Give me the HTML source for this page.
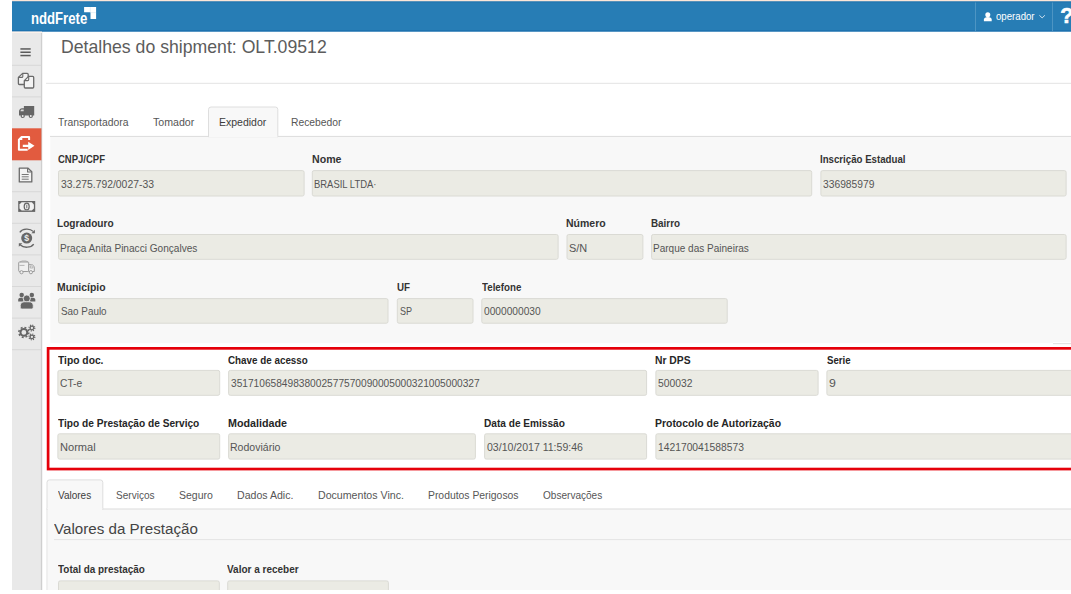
<!DOCTYPE html>
<html lang="pt-BR">
<head>
<meta charset="utf-8">
<title>nddFrete - Detalhes do shipment</title>
<style>
html,body{margin:0;padding:0;}
body{width:1071px;height:594px;overflow:hidden;background:#fff;position:relative;font-family:"Liberation Sans",sans-serif;}
#app{position:absolute;left:0;top:0;width:1071px;height:594px;overflow:hidden;}
.abs{position:absolute;}
.t{position:absolute;white-space:nowrap;line-height:20px;transform-origin:0 0;}
</style>
</head>
<body>
<div id="app">
<svg class="abs" style="left:0;top:0" width="1071" height="594" viewBox="0 0 1071 594">
  <!-- sidebar -->
  <rect x="12" y="31" width="29.300" height="559" fill="#e9e9e9"/>
  <rect x="40.900" y="31" width="1.100" height="559" fill="#cfcfcf"/>
  <rect x="42" y="31" width="1" height="559" fill="#f4f4f4"/>
  <rect x="12" y="128.300" width="29.400" height="32" fill="#e25b3f"/>
  <!-- header -->
  <rect x="12" y="0" width="1059" height="2" fill="#fbe6d8"/>
  <rect x="12" y="1.500" width="1059" height="30" fill="#277db5"/>
  <rect x="12" y="1.500" width="1059" height="1" fill="#2074ae"/>
  <rect x="12" y="30.200" width="1059" height="1.300" fill="#1c70ad"/>
  <rect x="12" y="31.500" width="30" height="1.500" fill="#fdf2eb"/>
  <rect x="975" y="2.500" width="1" height="28.500" fill="#4d95c3"/>
  <rect x="1052" y="2.500" width="1" height="28.500" fill="#4d95c3"/>
  <!-- logo squares -->
  <path d="M84.100 7.100H96.100V19H90.500V12.300H84.100Z" fill="#fff"/>
  <path d="M90.300 7.100V12.300M90.500 12.600H96.100" stroke="#cfe2ef" stroke-width="0.500" fill="none"/>
  <!-- user icon -->
  <circle cx="987.800" cy="14.800" r="2.500" fill="#fff"/>
  <path d="M983.900 21.300v-1.800c0-1.600 1.600-2.600 3.900-2.600s3.900 1 3.900 2.600v1.800z" fill="#fff"/>
  <path d="M1039.400 15.300l2.750 2.600 2.750-2.600" stroke="#cfe2ef" stroke-width="1" fill="none"/>
  <!-- title hr -->
  <rect x="46" y="82.800" width="1025" height="1" fill="#e3e3e3"/>
  <!-- top tab pane -->
  <rect x="50.300" y="136.400" width="1021" height="206.800" fill="#f8f8f8"/>
  <rect x="50" y="135.900" width="1021" height="1" fill="#dcdcdc"/>
  <path d="M208.500 136.900V109.500a2.500 2.500 0 0 1 2.500-2.500H275.300a2.500 2.500 0 0 1 2.500 2.500V136.900Z" fill="#f8f8f8" stroke="#dedede" stroke-width="1"/>
  <rect x="209" y="135.500" width="68.300" height="2" fill="#f8f8f8"/>
  <rect x="1053" y="341.900" width="18" height="1.100" fill="#fff"/>
  <rect x="1053" y="343" width="18" height="1.200" fill="#e4e4e4"/>
  <!-- red highlight box -->
  <rect x="48.100" y="348.350" width="1040" height="120.700" fill="none" stroke="#e5000a" stroke-width="2.700"/>
  <!-- bottom tab pane -->
  <rect x="46.500" y="509" width="1024.500" height="81" fill="#f8f8f8"/>
  <rect x="46.500" y="508.500" width="1024.500" height="1" fill="#dcdcdc"/>
  <path d="M47 509.500V482.400a2.500 2.500 0 0 1 2.500-2.500H100.300a2.500 2.500 0 0 1 2.500 2.500V509.500Z" fill="#f8f8f8" stroke="#dedede" stroke-width="1"/>
  <rect x="47.500" y="508" width="54.800" height="2.500" fill="#f8f8f8"/>
  <rect x="46.500" y="509" width="1" height="81" fill="#e6e6e6"/>
  <rect x="54" y="539.100" width="1017" height="1" fill="#e4e4e4"/>
</svg>
<svg class="abs" style="left:0;top:31px" width="60" height="559" viewBox="0 31 60 559">
  <!-- separators -->
  <g fill="#d8d8d8">
    <rect x="12" y="64.8" width="29.3" height="1"/><rect x="12" y="96.4" width="29.3" height="1"/>
    <rect x="12" y="191.2" width="29.3" height="1"/><rect x="12" y="222.8" width="29.3" height="1"/>
    <rect x="12" y="254.4" width="29.3" height="1"/><rect x="12" y="286" width="29.3" height="1"/>
    <rect x="12" y="317.6" width="29.3" height="1"/><rect x="12" y="349.2" width="29.3" height="1"/>
  </g>
  <!-- 1 bars -->
  <g fill="#5a5a5a"><rect x="20.4" y="48.2" width="10.3" height="1.5"/><rect x="20.4" y="51.5" width="10.3" height="1.5"/><rect x="20.4" y="54.8" width="10.3" height="1.5"/></g>
  <!-- 2 files -->
  <g fill="#f3f3f3" stroke="#6a6a6a" stroke-width="1.3" stroke-linejoin="round">
    <path d="M19.4 84.500a1 1 0 0 1-1-1V77.400L22.600 73.400H27.200a1 1 0 0 1 1 1V84.500Z"/>
    <path d="M22.800 73.600V76.400a1 1 0 0 1-1 1H18.600" fill="none" stroke-width="1.1"/>
    <path d="M28.600 76.400H32.700a1 1 0 0 1 1 1V87a1 1 0 0 1-1 1H25.300a1 1 0 0 1-1-1V80.600Z"/>
    <path d="M28.700 76.600V79.600a1 1 0 0 1-1 1H24.500" fill="none" stroke-width="1.1"/>
  </g>
  <!-- 3 truck (flipped) -->
  <g fill="#666">
    <path d="M23.900 106.100H34.200V115.500H19V111.600C19 109.700 20.300 108.300 22.100 108.300H23.900Z"/>
    <circle cx="22.700" cy="115.900" r="2.150"/><circle cx="30.800" cy="115.900" r="2.150"/>
  </g>
  <path d="M21.300 109.500H23.700V111.200H20.500C20.500 110.400 20.800 109.800 21.300 109.500Z" fill="#dcdcdc"/>
  <circle cx="22.700" cy="116" r="0.950" fill="#f0f0f0"/><circle cx="30.800" cy="116" r="0.950" fill="#f0f0f0"/>
  <!-- 4 active: file + arrow -->
  <path d="M29.100 139.900V137.100H21.400L18.900 139.600V149.800H27.700" fill="none" stroke="#fff" stroke-width="2" stroke-linejoin="round"/>
  <path d="M19 139.900L22.300 136.700V139.900Z" fill="#fff"/>
  <path d="M22.800 144.800H28.200V141.700L34.500 145.850L28.200 150V146.900H22.800Z" fill="#fff"/>
  <!-- 5 file-text -->
  <g fill="#f3f3f3" stroke="#6a6a6a" stroke-width="1.3" stroke-linejoin="round">
    <path d="M19.300 168.100H27.800L31.800 171.800V181.900H19.300Z"/>
    <path d="M27.600 168.300V172H31.600" fill="none" stroke-width="1.1"/>
  </g>
  <g fill="#777"><rect x="21.700" y="174" width="7" height="1"/><rect x="21.700" y="176.300" width="7" height="1"/><rect x="21.700" y="178.700" width="7" height="1"/></g>
  <!-- 6 money -->
  <rect x="18.200" y="201" width="17" height="10.900" fill="#666"/>
  <path d="M21.600 202.300H31.800L33.900 204.400V208.500L31.800 210.600H21.600L19.500 208.500V204.400Z" fill="#f1f1f1"/>
  <ellipse cx="26.700" cy="206.450" rx="2.500" ry="3.300" fill="#f1f1f1" stroke="#666" stroke-width="1.200"/>
  <rect x="26.350" y="204.700" width="0.900" height="3.600" fill="#666"/>
  <!-- 7 dollar cycle -->
  <circle cx="26.700" cy="238.100" r="5.500" fill="#666"/>
  <text x="26.700" y="241.200" text-anchor="middle" font-family="Liberation Sans, sans-serif" font-weight="700" font-size="8.600" fill="#ececec">$</text>
  <g fill="none" stroke="#666" stroke-width="1.300">
    <path d="M19.800 232.300C22.400 228.300 30 228.100 33.200 231.400"/>
    <path d="M33.700 244.100C31 248 23.600 248.200 20.400 245"/>
  </g>
  <path d="M34.900 229.700V233.200H31.400Z" fill="#666"/>
  <path d="M18.800 246.700V243.200H22.300Z" fill="#666"/>
  <!-- 8 truck outline -->
  <g fill="#f0f0f0" stroke="#9c9c9c" stroke-width="1">
    <rect x="18.700" y="262" width="10" height="9.500" rx="0.800"/>
    <path d="M28.700 264.700H31.600C33.300 264.700 34.300 266.400 34.300 268V271.500H28.700Z"/>
    <path d="M30.200 266H31.500C32.400 266 32.900 267 32.900 268H30.200Z" stroke-width="0.700"/>
    <path d="M19.500 265.400H24.500M20 262L22 261H26L28 262" stroke-width="0.700" fill="none"/>
    <circle cx="21.500" cy="272.200" r="1.600"/><circle cx="30.900" cy="272.200" r="1.600"/>
  </g>
  <!-- 9 users -->
  <g fill="#666">
    <circle cx="21.700" cy="295" r="2.250"/><circle cx="31.800" cy="295" r="2.250"/>
    <path d="M18.200 301.500V299.800C18.200 298.400 19.200 297.700 20.400 297.700H22.800L23.600 301.500Z"/>
    <path d="M35.300 301.500V299.800C35.300 298.400 34.300 297.700 33.100 297.700H30.700L29.900 301.500Z"/>
    <circle cx="26.750" cy="298.500" r="3.500" stroke="#e9e9e9" stroke-width="0.800"/>
    <path d="M20.300 307.200V305.400C20.300 303.100 22.200 301.800 24.600 301.800H28.900C31.300 301.800 33.200 303.100 33.200 305.400V307.200C33.200 308.300 32.400 309 31.300 309H22.200C21.100 309 20.300 308.300 20.300 307.200Z" stroke="#e9e9e9" stroke-width="0.800"/>
  </g>
  <!-- 10 gears -->
  <g fill="none" stroke="#666">
    <circle cx="23.850" cy="332.400" r="3.400" stroke-width="2"/>
    <circle cx="23.850" cy="332.400" r="5" stroke-width="1.500" stroke-dasharray="1.963 1.964"/>
    <circle cx="31.900" cy="328" r="1.800" stroke-width="1.300"/>
    <circle cx="31.900" cy="328" r="2.900" stroke-width="1.200" stroke-dasharray="1.139 1.139"/>
    <circle cx="31.900" cy="336.900" r="1.800" stroke-width="1.300"/>
    <circle cx="31.900" cy="336.900" r="2.900" stroke-width="1.200" stroke-dasharray="1.139 1.139"/>
  </g>
</svg>

<svg class="abs" style="left:0;top:0" width="1071" height="594" viewBox="0 0 1071 594"><g fill="#ebebe4" stroke="#dadad4" stroke-width="1">
<rect x="58.50" y="170.60" width="245.60" height="25.40" rx="1.700"/>
<rect x="312.30" y="170.60" width="499.40" height="25.40" rx="1.700"/>
<rect x="820.90" y="170.60" width="245.20" height="25.40" rx="1.700"/>
<rect x="58.50" y="234.50" width="499.60" height="24.80" rx="1.700"/>
<rect x="567.00" y="234.50" width="75.90" height="24.80" rx="1.700"/>
<rect x="651.60" y="234.50" width="414.50" height="24.80" rx="1.700"/>
<rect x="58.50" y="298.60" width="329.50" height="24.60" rx="1.700"/>
<rect x="397.30" y="298.60" width="75.70" height="24.60" rx="1.700"/>
<rect x="481.80" y="298.60" width="245.40" height="24.60" rx="1.700"/>
<rect x="57.90" y="370.40" width="161.80" height="24.90" rx="1.700"/>
<rect x="228.60" y="370.40" width="418.00" height="24.90" rx="1.700"/>
<rect x="655.90" y="370.40" width="162.20" height="24.90" rx="1.700"/>
<rect x="826.90" y="370.40" width="252.60" height="24.90" rx="1.700"/>
<rect x="57.90" y="433.80" width="161.80" height="25.30" rx="1.700"/>
<rect x="228.60" y="433.80" width="246.80" height="25.30" rx="1.700"/>
<rect x="484.60" y="433.80" width="162.00" height="25.30" rx="1.700"/>
<rect x="655.90" y="433.80" width="423.60" height="25.30" rx="1.700"/>
<rect x="58.50" y="580.90" width="160.80" height="24.60" rx="1.700"/>
<rect x="227.70" y="580.90" width="160.70" height="24.60" rx="1.700"/>
</g></svg>
<span class="t" style="left:30.98px;top:9.00px;font-size:16px;font-weight:700;color:#fff;transform:scaleX(0.8209)">nddFrete</span>
<span class="t" style="left:996.06px;top:6.00px;font-size:11px;font-weight:400;color:#fff;transform:scaleX(0.8759)">operador</span>
<span class="t" style="left:1060.20px;top:6.00px;font-size:21.5px;font-weight:700;color:#fff;transform:scaleX(1.0000);-webkit-text-stroke:0.6px #fff">?</span>
<span class="t" style="left:60.81px;top:37.00px;font-size:17.8px;font-weight:400;color:#5c5c5c;transform:scaleX(0.9932)">Detalhes do shipment: OLT.09512</span>
<span class="t" style="left:57.56px;top:112.00px;font-size:11px;font-weight:400;color:#565656;transform:scaleX(0.9423)">Transportadora</span>
<span class="t" style="left:153.36px;top:112.00px;font-size:11px;font-weight:400;color:#565656;transform:scaleX(0.9647)">Tomador</span>
<span class="t" style="left:219.45px;top:112.00px;font-size:11px;font-weight:400;color:#3c3c3c;transform:scaleX(0.9546)">Expedidor</span>
<span class="t" style="left:291.06px;top:112.00px;font-size:11px;font-weight:400;color:#565656;transform:scaleX(0.9384)">Recebedor</span>
<span class="t" style="left:57.57px;top:149.00px;font-size:11px;font-weight:700;color:#333;transform:scaleX(0.8636)">CNPJ/CPF</span>
<span class="t" style="left:60.83px;top:174.00px;font-size:11px;font-weight:400;color:#555;transform:scaleX(0.9436)">33.275.792/0027-33</span>
<span class="t" style="left:311.88px;top:149.00px;font-size:11px;font-weight:700;color:#333;transform:scaleX(0.9661)">Nome</span>
<span class="t" style="left:313.74px;top:174.00px;font-size:11px;font-weight:400;color:#555;transform:scaleX(0.8582)">BRASIL LTDA·</span>
<span class="t" style="left:820.04px;top:149.00px;font-size:11px;font-weight:700;color:#333;transform:scaleX(0.8794)">Inscrição Estadual</span>
<span class="t" style="left:823.23px;top:174.00px;font-size:11px;font-weight:400;color:#555;transform:scaleX(0.9333)">336985979</span>
<span class="t" style="left:57.31px;top:213.00px;font-size:11px;font-weight:700;color:#333;transform:scaleX(0.9174)">Logradouro</span>
<span class="t" style="left:60.38px;top:238.00px;font-size:11px;font-weight:400;color:#555;transform:scaleX(0.9172)">Praça Anita Pinacci Gonçalves</span>
<span class="t" style="left:565.88px;top:213.00px;font-size:11px;font-weight:700;color:#333;transform:scaleX(0.9540)">Número</span>
<span class="t" style="left:569.20px;top:238.00px;font-size:11px;font-weight:400;color:#555;transform:scaleX(0.9941)">S/N</span>
<span class="t" style="left:650.63px;top:213.00px;font-size:11px;font-weight:700;color:#333;transform:scaleX(0.8960)">Bairro</span>
<span class="t" style="left:653.19px;top:238.00px;font-size:11px;font-weight:400;color:#555;transform:scaleX(0.9108)">Parque das Paineiras</span>
<span class="t" style="left:57.29px;top:277.00px;font-size:11px;font-weight:700;color:#333;transform:scaleX(0.9453)">Município</span>
<span class="t" style="left:60.85px;top:301.00px;font-size:11px;font-weight:400;color:#555;transform:scaleX(0.8985)">Sao Paulo</span>
<span class="t" style="left:396.83px;top:277.00px;font-size:11px;font-weight:700;color:#333;transform:scaleX(0.8889)">UF</span>
<span class="t" style="left:399.79px;top:301.00px;font-size:11px;font-weight:400;color:#555;transform:scaleX(0.8222)">SP</span>
<span class="t" style="left:482.28px;top:277.00px;font-size:11px;font-weight:700;color:#333;transform:scaleX(0.8846)">Telefone</span>
<span class="t" style="left:484.44px;top:301.00px;font-size:11px;font-weight:400;color:#555;transform:scaleX(0.9261)">0000000030</span>
<span class="t" style="left:57.67px;top:350.00px;font-size:11px;font-weight:700;color:#262626;transform:scaleX(0.9340)">Tipo doc.</span>
<span class="t" style="left:60.13px;top:373.00px;font-size:11px;font-weight:400;color:#555;transform:scaleX(0.9304)">CT-e</span>
<span class="t" style="left:228.05px;top:350.00px;font-size:11px;font-weight:700;color:#262626;transform:scaleX(0.8941)">Chave de acesso</span>
<span class="t" style="left:230.84px;top:373.00px;font-size:11px;font-weight:400;color:#555;transform:scaleX(0.9238)">35171065849838002577570090005000321005000327</span>
<span class="t" style="left:655.20px;top:350.00px;font-size:11px;font-weight:700;color:#262626;transform:scaleX(0.9388)">Nr DPS</span>
<span class="t" style="left:658.43px;top:373.00px;font-size:11px;font-weight:400;color:#555;transform:scaleX(0.9371)">500032</span>
<span class="t" style="left:826.78px;top:350.00px;font-size:11px;font-weight:700;color:#262626;transform:scaleX(0.8762)">Serie</span>
<span class="t" style="left:829.24px;top:373.00px;font-size:11px;font-weight:400;color:#555;transform:scaleX(1.1200)">9</span>
<span class="t" style="left:57.67px;top:413.00px;font-size:11px;font-weight:700;color:#262626;transform:scaleX(0.9220)">Tipo de Prestação de Serviço</span>
<span class="t" style="left:59.59px;top:437.00px;font-size:11px;font-weight:400;color:#555;transform:scaleX(1.0074)">Normal</span>
<span class="t" style="left:228.07px;top:413.00px;font-size:11px;font-weight:700;color:#262626;transform:scaleX(0.9748)">Modalidade</span>
<span class="t" style="left:230.34px;top:437.00px;font-size:11px;font-weight:400;color:#555;transform:scaleX(0.9588)">Rodoviário</span>
<span class="t" style="left:484.41px;top:413.00px;font-size:11px;font-weight:700;color:#262626;transform:scaleX(0.9187)">Data de Emissão</span>
<span class="t" style="left:487.02px;top:437.00px;font-size:11px;font-weight:400;color:#555;transform:scaleX(0.9582)">03/10/2017 11:59:46</span>
<span class="t" style="left:655.19px;top:413.00px;font-size:11px;font-weight:700;color:#262626;transform:scaleX(0.9488)">Protocolo de Autorização</span>
<span class="t" style="left:657.50px;top:437.00px;font-size:11px;font-weight:400;color:#555;transform:scaleX(0.9359)">142170041588573</span>
<span class="t" style="left:58.27px;top:485.00px;font-size:11px;font-weight:400;color:#3c3c3c;transform:scaleX(0.9091)">Valores</span>
<span class="t" style="left:116.14px;top:485.00px;font-size:11px;font-weight:400;color:#565656;transform:scaleX(0.9139)">Serviços</span>
<span class="t" style="left:179.32px;top:485.00px;font-size:11px;font-weight:400;color:#565656;transform:scaleX(0.9565)">Seguro</span>
<span class="t" style="left:237.34px;top:485.00px;font-size:11px;font-weight:400;color:#565656;transform:scaleX(0.9604)">Dados Adic.</span>
<span class="t" style="left:318.04px;top:485.00px;font-size:11px;font-weight:400;color:#565656;transform:scaleX(0.9644)">Documentos Vinc.</span>
<span class="t" style="left:427.76px;top:485.00px;font-size:11px;font-weight:400;color:#565656;transform:scaleX(0.9429)">Produtos Perigosos</span>
<span class="t" style="left:543.24px;top:485.00px;font-size:11px;font-weight:400;color:#565656;transform:scaleX(0.9141)">Observações</span>
<span class="t" style="left:53.75px;top:519.00px;font-size:15.2px;font-weight:400;color:#444;transform:scaleX(0.9983)">Valores da Prestação</span>
<span class="t" style="left:57.77px;top:559.00px;font-size:11px;font-weight:700;color:#333;transform:scaleX(0.9013)">Total da prestação</span>
<span class="t" style="left:227.27px;top:559.00px;font-size:11px;font-weight:700;color:#333;transform:scaleX(0.9083)">Valor a receber</span>
<!-- crop masks -->
<div class="abs" style="left:0;top:590px;width:1071px;height:4px;background:#fff"></div>
<div class="abs" style="left:0;top:0;width:12px;height:594px;background:#fff"></div>
</div>
</body>
</html>
